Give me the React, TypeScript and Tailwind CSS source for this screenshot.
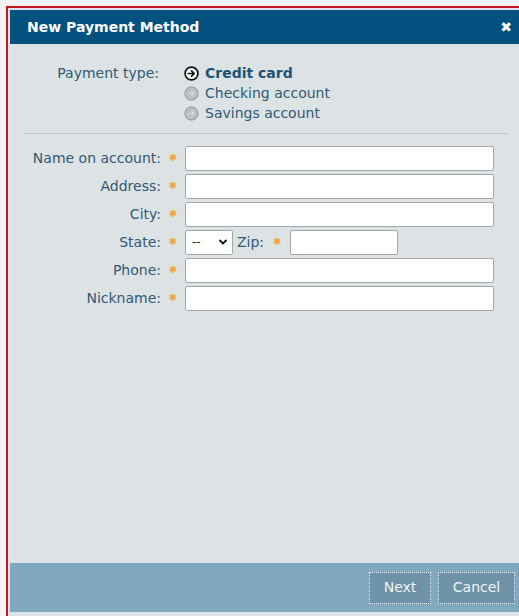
import React from "react";

const font = { fontFamily: '"DejaVu Sans", Verdana, sans-serif' };

function RadioIcon({ selected }: { selected: boolean }) {
  if (selected) {
    return (
      <svg width="15" height="15" viewBox="0 0 15 15" className="shrink-0">
        <circle cx="7.5" cy="7.5" r="6.4" fill="#fff" stroke="#111" strokeWidth="1.7" />
        <path d="M4.2 7.5h6M7.6 4.9 10.2 7.5 7.6 10.1" fill="none" stroke="#111" strokeWidth="1.7" strokeLinecap="round" strokeLinejoin="round" />
      </svg>
    );
  }
  return (
    <svg width="15" height="15" viewBox="0 0 15 15" className="shrink-0">
      <circle cx="7.5" cy="7.5" r="6.6" fill="#bcc0c3" stroke="#8e9397" strokeWidth="1" />
      <path d="M4.4 7.5h5.6M7.6 5.1 10 7.5 7.6 9.9" fill="none" stroke="#d6d8da" strokeWidth="1.2" strokeLinecap="round" strokeLinejoin="round" />
    </svg>
  );
}

function Star() {
  return <span className="w-[24px] text-center text-[#f2a33a] text-[10px] leading-none">✱</span>;
}

function Row({ label, children }: { label: string; children: React.ReactNode }) {
  return (
    <div className="flex items-center h-[28px]">
      <div className="w-[151px] text-right text-[14px] text-[#2f5a74]">{label}</div>
      <Star />
      {children}
    </div>
  );
}

function TextInput({ w }: { w: string }) {
  return <div className={`${w} h-[25px] bg-white border border-[#a3a7aa] rounded-[2px]`} />;
}

export default function App() {
  return (
    <div className="w-[519px] h-[616px] bg-[#f3f3f3] pt-[6px] pl-[6px] overflow-hidden" style={font}>
      <div className="h-full border-l-2 border-t-2 border-[#c6151c] bg-[#dfe5ea] pt-[2px] pl-[2px] flex flex-col">
        {/* title bar */}
        <div className="h-[34px] bg-[#03517e] flex items-center justify-between pl-[17px] pr-[7px] shrink-0">
          <span className="text-white font-bold text-[14px]">New Payment Method</span>
          <span className="text-white font-bold text-[14px] leading-none">✖</span>
        </div>

        {/* body */}
        <div className="flex-1 bg-[#dde2e5] pt-[19px]">
          <div className="flex">
            <div className="w-[151px] text-right pr-[2px] text-[14px] text-[#2f5a74] leading-[20px]">Payment type:</div>
            <div className="pl-[23px] flex flex-col">
              <div className="flex items-center gap-[6px] h-[20px]">
                <RadioIcon selected />
                <span className="text-[14px] font-bold text-[#1d5275]">Credit card</span>
              </div>
              <div className="flex items-center gap-[6px] h-[20px]">
                <RadioIcon selected={false} />
                <span className="text-[14px] text-[#2f5a74]">Checking account</span>
              </div>
              <div className="flex items-center gap-[6px] h-[20px]">
                <RadioIcon selected={false} />
                <span className="text-[14px] text-[#2f5a74]">Savings account</span>
              </div>
            </div>
          </div>

          <div className="ml-[15px] mr-[12px] mt-[10px] border-t border-dotted border-[#a9afb3]" />

          <div className="flex flex-col pt-[10px]">
            <Row label="Name on account:">
              <TextInput w="w-[309px]" />
            </Row>
            <Row label="Address:">
              <TextInput w="w-[309px]" />
            </Row>
            <Row label="City:">
              <TextInput w="w-[309px]" />
            </Row>
            <Row label="State:">
              <div className="w-[48px] h-[25px] bg-white border border-[#a3a7aa] rounded-[2px] flex items-center justify-between pl-[6px] pr-[4px]">
                <span className="text-[12px] text-[#222]">--</span>
                <svg width="10" height="8" viewBox="0 0 10 8">
                  <path d="M1.5 2 5 5.5 8.5 2" fill="none" stroke="#111" strokeWidth="1.8" />
                </svg>
              </div>
              <span className="ml-[4px] text-[14px] text-[#2f5a74]">Zip:</span>
              <span className="w-[26px] text-center text-[#f2a33a] text-[10px] leading-none">✱</span>
              <div className="w-[108px] h-[25px] bg-white border border-[#a3a7aa] rounded-[2px]" />
            </Row>
            <Row label="Phone:">
              <TextInput w="w-[309px]" />
            </Row>
            <Row label="Nickname:">
              <TextInput w="w-[309px]" />
            </Row>
          </div>
        </div>

        {/* footer */}
        <div className="h-[49px] bg-[#80a9c0] flex items-center justify-end gap-[7px] pr-[4px] shrink-0">
          <button className="w-[62px] h-[32px] bg-[#6e92a7] border border-dotted border-[#e8eef2] text-[14px] text-[#f0f4f6]">Next</button>
          <button className="w-[77px] h-[32px] bg-[#6e92a7] border border-dotted border-[#e8eef2] text-[14px] text-[#f0f4f6]">Cancel</button>
        </div>
        <div className="h-[4px] bg-[#dde2e5] shrink-0" />
      </div>
    </div>
  );
}
